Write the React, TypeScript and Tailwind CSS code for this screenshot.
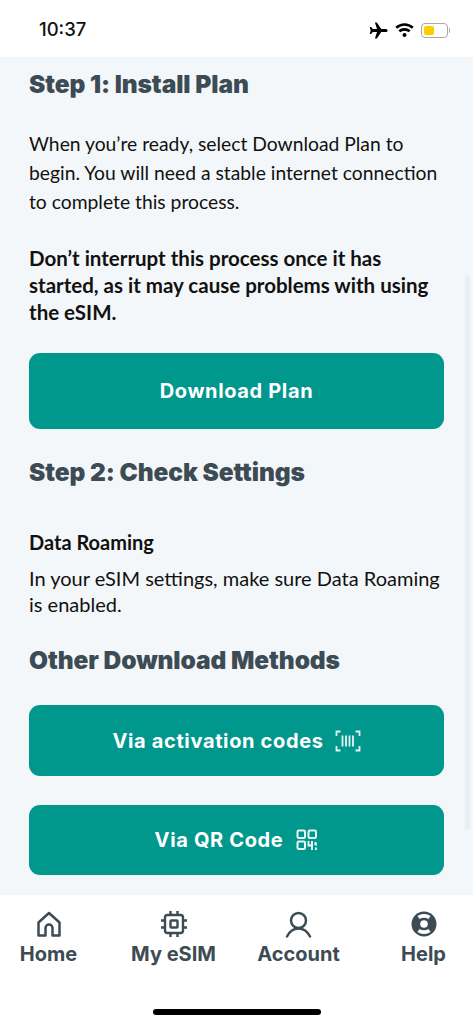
const body = "font-['Lato','Noto_Sans',sans-serif]";
const display = "font-['Inter','Noto_Sans',sans-serif]";

const Heading = ({ children, className }: { children: string; className: string }) => (
  <h2 className={`${display} text-[24.5px] leading-[32px] font-black tracking-[-0.1px] text-[#3d4b54] ${className}`}>
    {children}
  </h2>
);

const ActionButton = ({ children, className }: { children: React.ReactNode; className: string }) => (
  <button className={`${display} flex shrink-0 items-center justify-center rounded-[11px] bg-[#00978d] text-[20px] font-bold tracking-[0.65px] text-white ${className}`}>
    {children}
  </button>
);

const BarcodeIcon = () => (
  <svg width="26" height="22" viewBox="0 0 26 22" fill="none" stroke="#e6f5f3" strokeWidth="1.8">
    <path d="M1.500 6V1.500H5.500M20.500 1.500h4V6M1.500 16v4.500h4M20.500 20.500h4V16" />
    <path d="M7.500 5.500v11M11 5.500v11M14.500 5.500v11M18 5.500v11" />
  </svg>
);

const QrIcon = () => (
  <svg width="22" height="22" viewBox="0 0 22 22" fill="none" stroke="#e6f5f3" strokeWidth="2">
    <rect x="1.500" y="1.500" width="7.500" height="7.500" rx="1.200" />
    <rect x="12.500" y="1.500" width="7.500" height="7.500" rx="1.200" />
    <rect x="1.500" y="12.500" width="7.500" height="7.500" rx="1.200" />
    <path d="M12.500 12v4.500h3M16 12v9M19.500 13v2.500h1.500M20 18.500v2.500" />
  </svg>
);

const HomeIcon = () => (
  <svg width="26" height="27" viewBox="0 0 26 27" fill="none" stroke="#3d4b54" strokeWidth="2.500" strokeLinejoin="round">
    <path d="M13 2 2.500 11.500V24.500H9.500V17a3.500 3.500 0 0 1 7 0V24.500H23.500V11.500Z" />
  </svg>
);

const ChipIcon = () => (
  <svg width="28" height="28" viewBox="0 0 28 28" fill="none" stroke="#3d4b54" strokeWidth="2.400">
    <rect x="5" y="5" width="18" height="18" rx="2.500" />
    <rect x="10.500" y="10.500" width="7" height="7" rx="0.800" />
    <path d="M10.500 1V5M17.500 1V5M10.500 23v4M17.500 23v4M1 10.500H5M1 17.500H5M23 10.500h4M23 17.500h4" />
  </svg>
);

const AccountIcon = () => (
  <svg width="27" height="27" viewBox="0 0 27 27" fill="none" stroke="#3d4b54" strokeWidth="2.500" strokeLinecap="round">
    <circle cx="13.500" cy="9.500" r="7.500" />
    <path d="M2 25.500c2.500-5 6.500-8 11.500-8s9 3 11.500 8" />
  </svg>
);

const HelpIcon = () => (
  <svg width="26" height="26" viewBox="0 0 26 26" fill="none">
    <circle cx="13" cy="13" r="12.500" fill="#3d4b54" />
    <circle cx="13" cy="13" r="3.800" fill="#fff" />
    <path d="M7.500 6.500C10.500 4.300 15.500 4.300 18.500 6.500M7.500 19.500C10.500 21.700 15.500 21.700 18.500 19.500" stroke="#fff" strokeWidth="3.600" />
  </svg>
);

const Tab = ({ icon, label }: { icon: React.ReactNode; label: string }) => (
  <div className="flex flex-col items-center">
    <div className="flex h-[28px] items-center">{icon}</div>
    <span className={`${display} mt-[3px] text-[20px] leading-[26px] font-bold text-[#3d4b54]`}>{label}</span>
  </div>
);

export default function App() {
  return (
    <div className={`${body} relative flex h-[1024px] w-[473px] flex-col overflow-hidden bg-white`}>
      {/* status bar */}
      <div className="flex h-[57px] shrink-0 items-center justify-between pr-[23px] pl-[39px] pt-[3px]">
        <span className="font-['Inter',sans-serif] text-[18.500px] font-medium text-[#111]">10:37</span>
        <div className="flex items-center gap-[7px]">
          <svg width="19" height="17" viewBox="0 0 18 16" fill="#000">
            <path d="M17.600 8c0-.9-1-1.500-2-1.500h-4L7.400.4H5.600l2 6.100H3.600L2 4.600H.7l.9 3.400-.9 3.400H2l1.600-1.900h4l-2 6.100h1.800l4.200-6.100h4c1 0 2-.6 2-1.500Z" />
          </svg>
          <svg width="19" height="14" viewBox="0 0 19 14" fill="none" stroke="#000" strokeWidth="2.600">
            <path d="M1.200 4.800C6 .4 13 .4 17.800 4.800" />
            <path d="M4.300 8.300c3-2.600 7.400-2.600 10.400 0" />
            <circle cx="9.500" cy="12" r="2" fill="#000" stroke="none" />
          </svg>
          <div className="flex items-center">
            <div className="flex h-[15px] w-[27px] items-center rounded-[4px] border border-[#a8a8a8] p-[2px]">
              <div className="h-full w-[10px] rounded-[2px] bg-[#ffcc00]" />
            </div>
            <div className="ml-[1px] h-[5px] w-[1.500px] rounded-r-sm bg-[#a8a8a8]" />
          </div>
        </div>
      </div>

      {/* content */}
      <main className="relative flex h-[838px] shrink-0 flex-col overflow-hidden bg-[#f4f7f9] px-[29px]">
        <Heading className="mt-[11px]">Step 1: Install Plan</Heading>
        <p className="mt-[29px] text-[19.300px] leading-[29px] text-[#111]">
          When you’re ready, select Download Plan to begin. You will need a stable internet connection to complete this process.
        </p>
        <p className="mt-[29px] text-[20.500px] leading-[27px] font-bold text-[#111]">
          Don’t interrupt this process once it has started, as it may cause problems with using the eSIM.
        </p>
        <ActionButton className="mt-[27px] h-[76px]">Download Plan</ActionButton>
        <Heading className="mt-[27px]">Step 2: Check Settings</Heading>
        <p className="mt-[40px] text-[20px] leading-[28px] font-bold text-[#111]">Data Roaming</p>
        <p className="mt-[9px] text-[20px] leading-[26px] text-[#111]">
          In your eSIM settings, make sure Data Roaming is enabled.
        </p>
        <Heading className="mt-[27px]">Other Download Methods</Heading>
        <ActionButton className="mt-[29px] h-[71px] gap-[11px]">
          Via activation codes
          <BarcodeIcon />
        </ActionButton>
        <ActionButton className="mt-[29px] h-[70px] gap-[13px]">
          Via QR Code
          <QrIcon />
        </ActionButton>
        {/* scroll indicator */}
        <div className="absolute top-[218px] right-[3px] h-[555px] w-[5px] rounded-full bg-[#eceff1]" />
      </main>

      {/* tab bar */}
      <nav className="ml-[-14px] grid flex-1 grid-cols-[125px_125px_125px_125px] items-start pt-[15px]">
        <Tab icon={<HomeIcon />} label="Home" />
        <Tab icon={<ChipIcon />} label="My eSIM" />
        <Tab icon={<AccountIcon />} label="Account" />
        <Tab icon={<HelpIcon />} label="Help" />
      </nav>

      {/* home indicator */}
      <div className="absolute bottom-[9px] left-[153px] h-[6px] w-[168px] rounded-full bg-black" />
    </div>
  );
}
